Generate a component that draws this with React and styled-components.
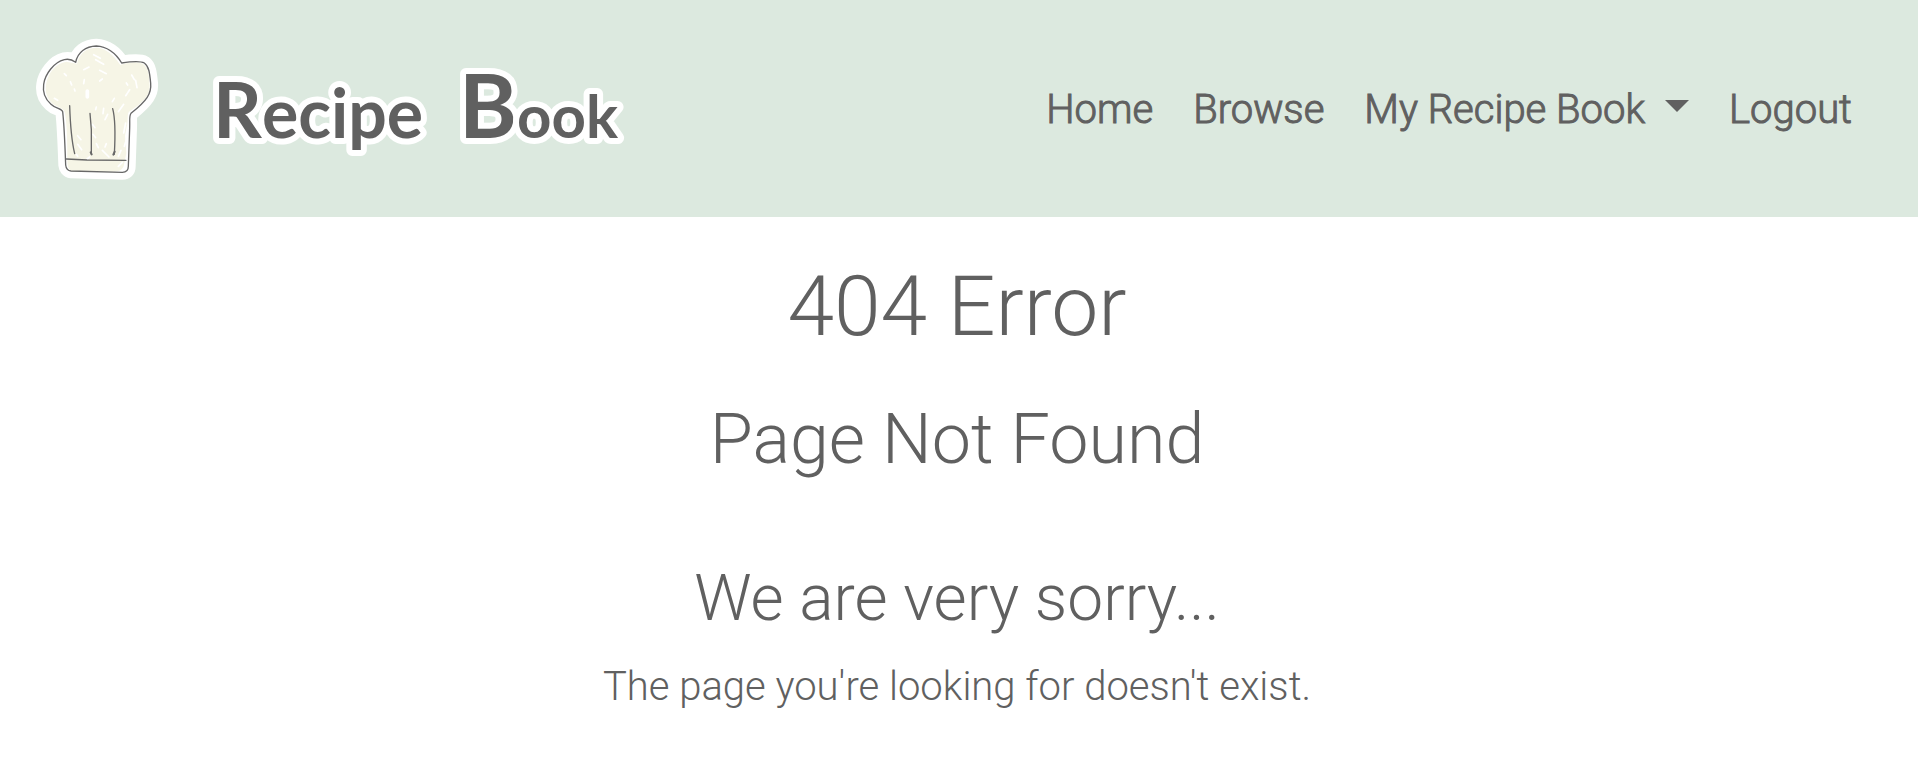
import React from "react";
import styled, { createGlobalStyle } from "styled-components";

const GlobalStyle = createGlobalStyle`
  *, *::before, *::after { box-sizing: border-box; }
  body {
    margin: 0;
    background: #ffffff;
    color: #606060;
    font-family: Roboto, sans-serif;
    font-size: 40px;
    font-weight: 300;
    line-height: 60px;
  }
  h1, h2, h3, p { margin: 0; }
`;

const Header = styled.header`
  display: flex;
  align-items: center;
  justify-content: space-between;
  padding: 37px 66px 35px 35px;
  background: #dce9df;
`;

const Brand = styled.a`
  display: flex;
  align-items: center;
  gap: 44px;
  color: inherit;
  text-decoration: none;
`;

const HatIcon = styled.svg`
  display: block;
  flex: none;
  width: 124px;
  height: 145px;
`;

const Wordmark = styled.svg`
  display: block;
  flex: none;
  width: 430px;
  height: 120px;
  overflow: visible;
  font-family: Lato, sans-serif;
  font-weight: 700;
  fill: #606060;
  stroke: #ffffff;
  stroke-width: 12px;
  stroke-linejoin: round;
  paint-order: stroke fill;
`;

const NavList = styled.ul`
  display: flex;
  gap: 40px;
  margin: 0;
  padding: 0;
  list-style: none;
`;

const NavLink = styled.a`
  display: flex;
  align-items: center;
  color: inherit;
  font-size: 40px;
  font-weight: 300;
  line-height: 60px;
  white-space: nowrap;
  text-decoration: none;
  -webkit-text-stroke: 1px currentColor;
`;

const NavToggle = styled(NavLink).attrs({ as: "button", type: "button" })`
  padding: 0;
  border: 0;
  background: none;
  font-family: inherit;
  cursor: pointer;

  &::after {
    content: "";
    margin: 0 0 8px 20px;
    border: 12px solid transparent;
    border-top-color: currentColor;
    border-bottom: 0;
  }
`;

const Main = styled.main`
  padding: 40px 24px 40px 20px;
  text-align: center;
`;

const Title = styled.h1`
  font-size: 84px;
  font-weight: 300;
  line-height: 100px;
`;

const Subtitle = styled.h2`
  margin-top: 40px;
  font-size: 70px;
  font-weight: 300;
  line-height: 84px;
`;

const Apology = styled.h3`
  margin-top: 80px;
  font-size: 64px;
  font-weight: 300;
  line-height: 76px;
`;

const Message = styled.p`
  margin-top: 20px;
`;

const hatOutline =
  "M166 128 C172 98 196 80 228 79 C258 80 286 100 304 130 C328 126 358 122 372 130 C386 140 388 160 391 190 C394 222 380 242 332 281 C326 288 329 300 328 326 L324 440 C324 452 318 458 306 458 L152 454 C142 453 137 445 136 436 C134 380 132 320 127 276 C124 266 106 268 92 254 C72 236 67 214 70 194 C74 164 100 128 132 120 C148 116 158 122 166 128 Z";

function ChefHat() {
  return (
    <HatIcon viewBox="44 52 372 435" fill="none" strokeLinecap="round" strokeLinejoin="round" aria-hidden="true">
      <path d={hatOutline} fill="#ffffff" stroke="#ffffff" strokeWidth="44" />
      <path
        d="M170 132 C178 98 200 84 230 84 C258 86 280 106 300 136 C330 126 360 124 374 138 C386 150 386 174 388 200 C388 230 366 250 326 276 C320 282 324 300 320 316 L314 348 L318 400 L310 440 C304 452 296 456 280 456 L160 456 C144 452 141 440 141 420 C141 360 140 310 133 278 C128 262 104 262 92 248 C76 230 74 210 78 190 C84 160 106 130 138 126 Z"
        fill="#f6f5e6"
      />
      <g stroke="#ffffff" strokeWidth="5">
        <path d="M220 105 L240 116 M226 120 L250 134 M190 150 L206 142 M238 152 L258 162 M150 186 L154 196 M132 162 L138 168 M192 180 L190 192 M162 208 L164 214 M238 184 L246 178 M334 166 L342 180 M346 182 L350 204 M318 190 L322 196 M328 210 L316 228 M282 236 L276 246 M102 236 L112 242 M228 262 L226 270 M262 284 L254 300 M310 254 L294 276 M250 266 L248 282" />
        <path d="M216 314 L224 324 M218 344 L226 354 M172 348 L182 360 M172 374 L184 390 M228 372 L234 384 M258 372 L254 382 M246 392 L266 412 M168 404 L172 410 M302 392 L294 410 M208 412 L200 418 M306 428 L294 440 M316 310 L310 340 M318 360 L312 380" />
      </g>
      <path d="M201 214 L201 232" stroke="#ffffff" strokeWidth="11" />
      <g stroke="#686868" strokeWidth="4">
        <path d={hatOutline} />
        <path d="M138 418 L200 421 L317 422" />
        <path d="M148 258 C150 320 153 360 163 402" />
        <path d="M209 281 L213 330 L213 404" />
        <path d="M277 267 C286 300 285 350 282 404" />
      </g>
      <path d="M211 398 L214 404 M279 405 L283 396" stroke="#686868" strokeWidth="6" />
    </HatIcon>
  );
}

function BrandName() {
  return (
    <Wordmark viewBox="0 0 430 120" role="img" aria-label="Recipe Book">
      <text x="10" y="88">
        <tspan fontSize="76">R</tspan>
        <tspan fontSize="68">ecipe</tspan>
      </text>
      <text x="256" y="88">
        <tspan fontSize="88">B</tspan>
        <tspan fontSize="60">ook</tspan>
      </text>
    </Wordmark>
  );
}

export default function App() {
  return (
    <>
      <GlobalStyle />
      <Header>
        <Brand href="#">
          <ChefHat />
          <BrandName />
        </Brand>
        <nav>
          <NavList>
            <li><NavLink href="#">Home</NavLink></li>
            <li><NavLink href="#">Browse</NavLink></li>
            <li><NavToggle aria-haspopup="true" aria-expanded="false">My Recipe Book</NavToggle></li>
            <li><NavLink href="#">Logout</NavLink></li>
          </NavList>
        </nav>
      </Header>
      <Main>
        <Title>404 Error</Title>
        <Subtitle>Page Not Found</Subtitle>
        <Apology>We are very sorry...</Apology>
        <Message>The page you're looking for doesn't exist.</Message>
      </Main>
    </>
  );
}
